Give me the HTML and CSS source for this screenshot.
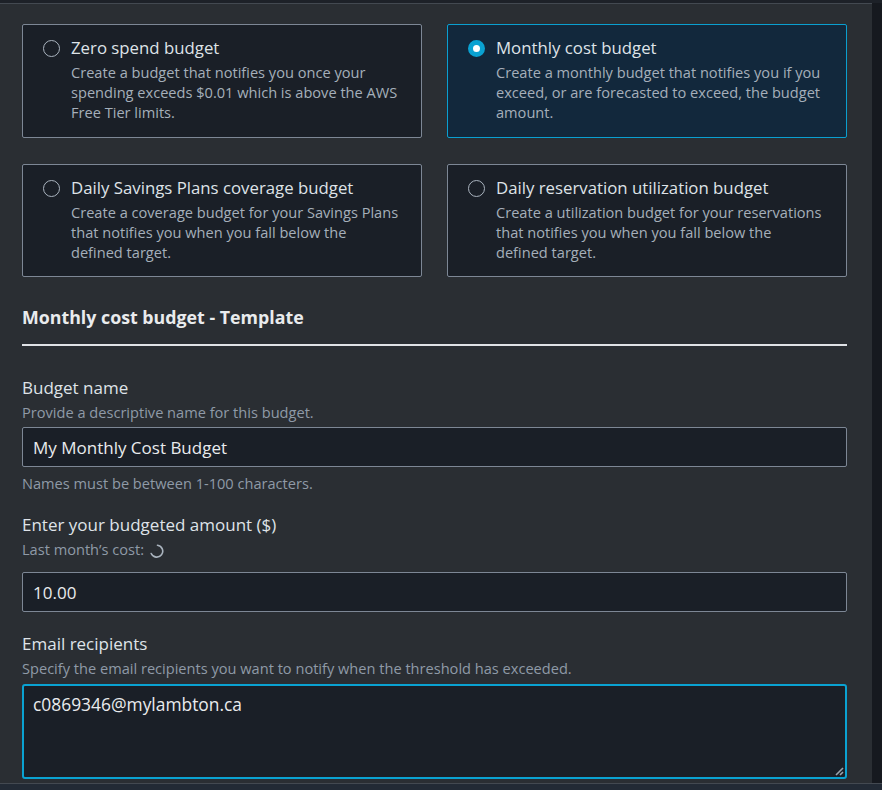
FILE: index.html
```html
<!DOCTYPE html>
<html lang="en">
<head>
<meta charset="utf-8">
<title>Budget templates</title>
<link rel="stylesheet" href="styles.css">
</head>
<body>
<div class="frame">
  <main class="panel">
    <div class="cards">
      <label class="card">
        <span class="radio"></span>
        <span class="card-body">
          <span class="card-title">Zero spend budget</span>
          <span class="card-desc">Create a budget that notifies you once your spending exceeds $0.01 which is above the AWS Free Tier limits.</span>
        </span>
      </label>
      <label class="card selected">
        <span class="radio on"></span>
        <span class="card-body">
          <span class="card-title">Monthly cost budget</span>
          <span class="card-desc">Create a monthly budget that notifies you if you exceed, or are forecasted to exceed, the budget amount.</span>
        </span>
      </label>
      <label class="card">
        <span class="radio"></span>
        <span class="card-body">
          <span class="card-title">Daily Savings Plans coverage budget</span>
          <span class="card-desc">Create a coverage budget for your Savings Plans that notifies you when you fall below the defined target.</span>
        </span>
      </label>
      <label class="card">
        <span class="radio"></span>
        <span class="card-body">
          <span class="card-title">Daily reservation utilization budget</span>
          <span class="card-desc">Create a utilization budget for your reservations that notifies you when you fall below the defined target.</span>
        </span>
      </label>
    </div>

    <h2 class="section-title">Monthly cost budget - Template</h2>

    <div class="field">
      <div class="label">Budget name</div>
      <div class="desc">Provide a descriptive name for this budget.</div>
      <div class="input">My Monthly Cost Budget</div>
      <div class="hint">Names must be between 1-100 characters.</div>
    </div>

    <div class="field">
      <div class="label">Enter your budgeted amount ($)</div>
      <div class="desc cost">Last month’s cost:
        <svg class="spinner" width="16" height="16" viewBox="0 0 16 16"><path d="M3.2 10.5 A6 6 0 1 0 9.5 2.2" fill="none" stroke="#aab4bf" stroke-width="1.6" stroke-linecap="round"/></svg>
      </div>
      <div class="input amount">10.00</div>
    </div>

    <div class="field">
      <div class="label">Email recipients</div>
      <div class="desc">Specify the email recipients you want to notify when the threshold has exceeded.</div>
      <div class="textarea">c0869346@mylambton.ca
        <svg class="grip" width="10" height="10" viewBox="0 0 10 10"><path d="M9 2 L2 9 M9 6 L6 9" stroke="#9aa3ad" stroke-width="1.6"/></svg>
      </div>
    </div>
  </main>
  <div class="sidebar"></div>
</div>
<div class="footer"></div>
</body>
</html>
```
FILE: styles.css
```css
* { box-sizing: border-box; }
html, body { margin: 0; padding: 0; }
body {
  background: #16191f;
  font-family: "Open Sans", "Noto Sans", sans-serif;
  color: #d1d5db;
  width: 882px;
  height: 790px;
  overflow: hidden;
}
.frame {
  display: flex;
  height: 783px;
  padding-top: 3px;
  background: #1d2128;
}
.panel {
  width: 872px;
  background: #2a2e33;
  border-top: 1px solid #434951;
  padding: 20px 25px 0 22px;
  overflow: hidden;
}
.sidebar {
  flex: 1;
  background: #16191f;
}
.footer {
  height: 7px;
  border-top: 1px solid #434951;
  background: #222a35;
}
.cards {
  display: grid;
  grid-template-columns: 400px 400px;
  column-gap: 25px;
  row-gap: 26px;
}
.card {
  display: flex;
  align-items: flex-start;
  gap: 11px;
  height: 114px;
  padding: 12px 22px 0 20px;
  background: #1a1f27;
  border: 1px solid #7d8795;
  border-radius: 2px;
}
.card:nth-child(n+3) { height: 113px; }
.card.selected {
  background: #12283c;
  border-color: #0a9fd0;
}
.radio {
  flex: none;
  width: 17px;
  height: 17px;
  margin-top: 3px;
  border: 1.5px solid #aab4bf;
  border-radius: 50%;
}
.radio.on {
  border: 5px solid #0aa2d2;
  background: #ffffff;
}
.card-body { display: flex; flex-direction: column; }
.card-title {
  font-size: 16.8px;
  line-height: 22px;
  color: #dfe3e8;
}
.card-desc {
  margin-top: 3px;
  font-size: 14.6px;
  line-height: 20px;
  color: #a5afba;
}
.section-title {
  margin: 28px 0 0;
  padding-bottom: 15px;
  border-bottom: 2px solid #dfe2e6;
  font-size: 17.8px;
  line-height: 24px;
  font-weight: 700;
  color: #e9ebed;
}
.field { margin-top: 31px; }
.field + .field { margin-top: 21px; }
.label {
  font-size: 17px;
  line-height: 22px;
  color: #dfe3e8;
}
.desc {
  margin-top: 3px;
  font-size: 14.6px;
  line-height: 20px;
  color: #8f9aa7;
}
.cost {
  display: flex;
  align-items: center;
  gap: 4px;
}
.spinner { margin-top: 4px; }
.input {
  margin-top: 5px;
  height: 40px;
  padding: 0 10px;
  display: flex;
  align-items: center;
  background: #1a1f27;
  border: 1px solid #7d8795;
  border-radius: 2px;
  font-size: 17px;
  color: #e9ebed;
}
.input.amount { margin-top: 13px; }
.hint {
  margin-top: 6px;
  font-size: 14.6px;
  line-height: 20px;
  color: #8f9aa7;
}
.textarea {
  position: relative;
  margin-top: 6px;
  height: 95px;
  padding: 6px 9px;
  background: #1a1f27;
  border: 2px solid #0aa2d2;
  border-radius: 3px;
  font-size: 17.4px;
  line-height: 24px;
  color: #e9ebed;
}
.grip {
  position: absolute;
  right: 1px;
  bottom: 1px;
}
```
